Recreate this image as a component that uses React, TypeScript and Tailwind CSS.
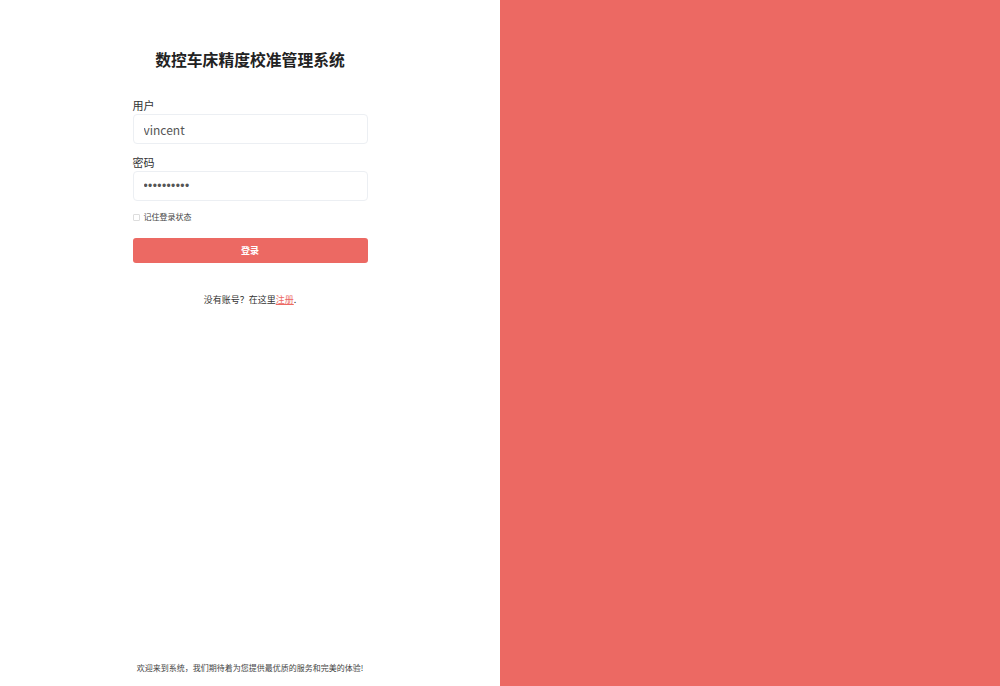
import { useState } from 'react';

const FONT = "font-['Noto_Sans_CJK_SC','Noto_Sans',sans-serif]";

export default function App() {
  const [user, setUser] = useState('vincent');
  const [pwd, setPwd] = useState('1234567890');
  const [remember, setRemember] = useState(false);

  return (
    <div className={`flex h-[686px] w-full ${FONT}`}>
      {/* Login column */}
      <div className="flex w-[500px] flex-col items-center bg-white">
        <div className="flex w-[235px] flex-1 flex-col">
          <h1 className="mt-[48px] text-center text-[15.8px] font-bold leading-[24px] text-[#222]">
            数控车床精度校准管理系统
          </h1>

          <label className="mt-[26px] text-[11px] leading-[15px] text-[#333]">用户</label>
          <input
            value={user}
            onChange={(e) => setUser(e.target.value)}
            className="mt-[1px] h-[30px] w-full rounded-[4px] border border-[#eceff3] px-[10px] text-[12px] text-[#555] outline-none"
          />

          <label className="mt-[11px] text-[11px] leading-[15px] text-[#333]">密码</label>
          <input
            type="password"
            value={pwd}
            onChange={(e) => setPwd(e.target.value)}
            className="mt-[1px] h-[30px] w-full rounded-[4px] border border-[#eceff3] px-[10px] font-['Liberation_Sans',sans-serif] text-[12px] tracking-[0.4px] text-[#555] outline-none"
          />

          <label className="mt-[10px] flex items-center gap-[4px] text-[8px] leading-[12px] text-[#444]">
            <input
              type="checkbox"
              checked={remember}
              onChange={(e) => setRemember(e.target.checked)}
              className="h-[7px] w-[7px] appearance-none rounded-[1px] border border-[#ddd]"
            />
            记住登录状态
          </label>

          <button className="mt-[15px] h-[25px] w-full rounded-[3px] bg-[#ec6963] text-[9px] font-bold text-white">
            登录
          </button>

          <p className="mt-[30px] text-center text-[9px] leading-[14px] text-[#333]">
            没有账号？在这里<a href="#" className="text-[#ec6963] underline">注册</a>.
          </p>
        </div>

        <p className="mb-[12px] text-[8px] leading-[12px] text-[#444]">
          欢迎来到系统，我们期待着为您提供最优质的服务和完美的体验!
        </p>
      </div>

      {/* Brand panel */}
      <div className="flex-1 bg-[#ec6963]" />
    </div>
  );
}
